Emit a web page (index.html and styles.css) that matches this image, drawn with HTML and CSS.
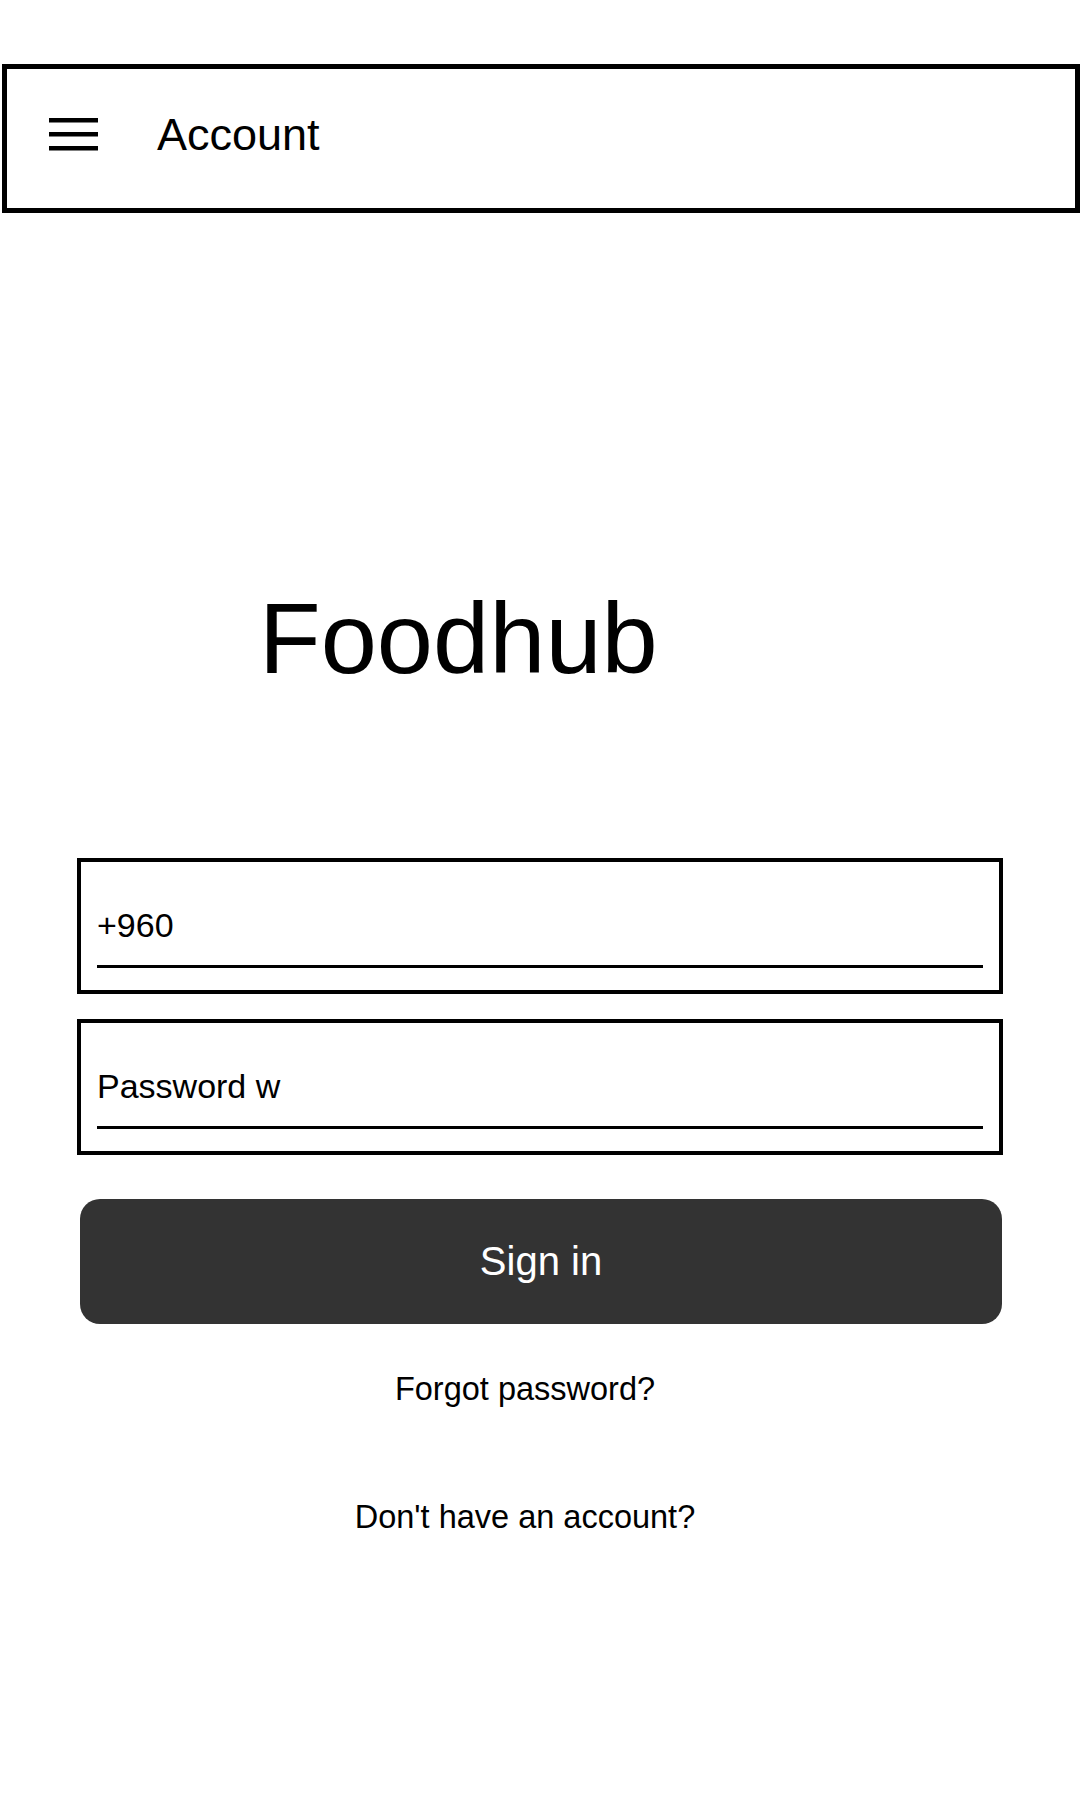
FILE: index.html
```html
<!DOCTYPE html>
<html lang="en">
<head>
<meta charset="utf-8">
<title>Foodhub - Account</title>
<link rel="stylesheet" href="styles.css">
</head>
<body>
<header class="topbar">
  <svg class="menu-icon" width="49" height="33" viewBox="0 0 49 33" aria-hidden="true">
    <rect x="0" y="0" width="49" height="4.5" fill="#000"/>
    <rect x="0" y="14" width="49" height="4.5" fill="#000"/>
    <rect x="0" y="28" width="49" height="4.5" fill="#000"/>
  </svg>
  <span class="topbar-title">Account</span>
</header>
<main class="content">
  <h1 class="brand">Foodhub</h1>
  <form class="form">
    <div class="field"><div class="field-line">+960</div></div>
    <div class="field field-second"><div class="field-line">Password w</div></div>
    <div class="btn">Sign in</div>
    <div class="links">
      <div class="link link-forgot">Forgot password?</div>
      <div class="link link-signup">Don't have an account?</div>
    </div>
  </form>
</main>
</body>
</html>
```
FILE: styles.css
```css
* { box-sizing: border-box; }
html, body { margin: 0; padding: 0; background: #fff; }
body {
  font-family: "Liberation Sans", Arial, sans-serif;
  color: #000;
  width: 1080px;
  min-height: 1800px;
  overflow: hidden;
}
.topbar {
  margin: 64px 0 0 2px;
  width: 1078px;
  height: 149px;
  border: 5px solid #000;
  display: flex;
  align-items: center;
  padding: 0 0 8px 42px;
}
.menu-icon { display: block; flex: none; }
.topbar-title {
  margin-left: 59px;
  font-size: 45px;
  line-height: 52px;
}
.content { padding: 0 77px; }
.brand {
  margin: 375px 0 0 0;
  padding-left: 182px;
  font-size: 101px;
  line-height: 100px;
  font-weight: normal;
}
.form {
  margin-top: 170px;
  width: 926px;
  display: flex;
  flex-direction: column;
}
.field {
  height: 136px;
  border: 4px solid #000;
  padding: 43px 16px 22px;
}
.field-second { margin-top: 25px; }
.field-line {
  font-size: 34px;
  line-height: 40px;
  padding-bottom: 20px;
  border-bottom: 3px solid #000;
}
.btn {
  margin: 44px 1px 0 3px;
  height: 125px;
  border-radius: 20px;
  background: #333;
  color: #fff;
  font-size: 40px;
  line-height: 125px;
  text-align: center;
}
.links {
  padding-right: 30px;
  text-align: center;
}
.link {
  font-size: 32.5px;
  line-height: 40px;
}
.link-forgot { margin-top: 45px; }
.link-signup { margin-top: 88px; }
```
